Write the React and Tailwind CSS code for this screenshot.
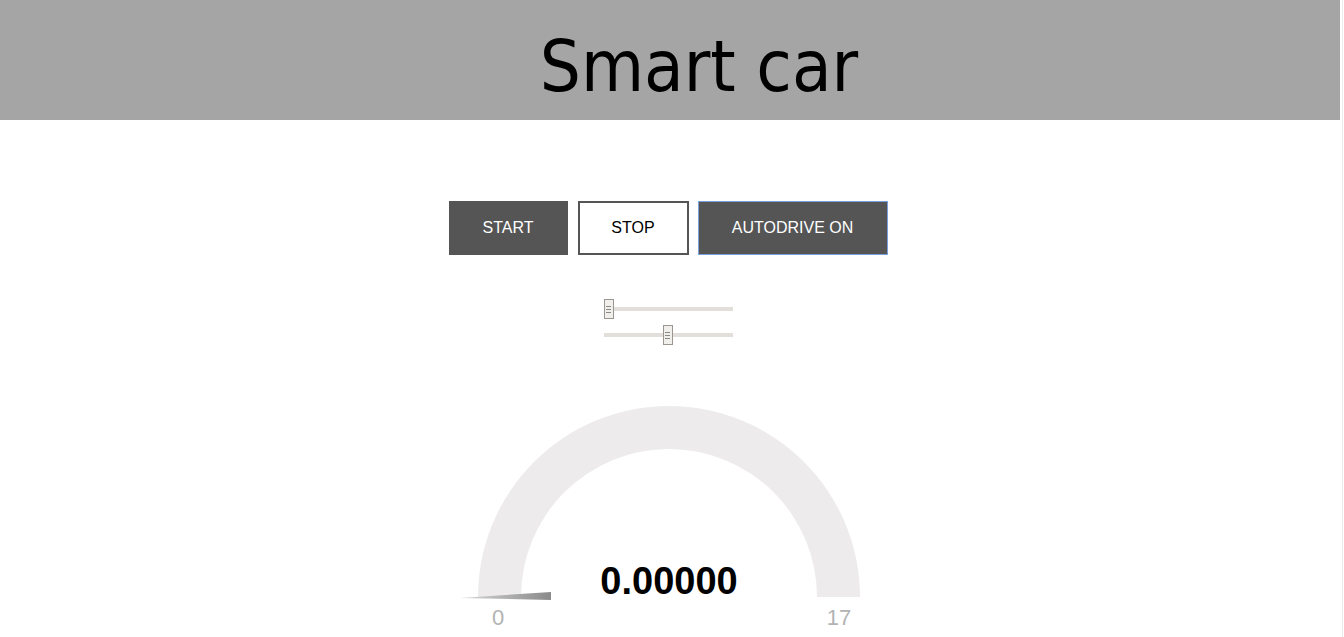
import React from 'react';

const Slider = ({ pos }) => (
  <div className="relative w-[129px] h-[20px]">
    <div className="absolute left-0 right-0 top-[8px] h-[4px] bg-[#e2dfda]" />
    <div
      className="absolute top-0 w-[10px] h-[20px] bg-[#f1efec] border border-[#9c9690] flex flex-col items-center justify-center gap-[2px]"
      style={{ left: pos }}
    >
      <span className="block w-[5px] h-px bg-[#8e8882]" />
      <span className="block w-[5px] h-px bg-[#8e8882]" />
      <span className="block w-[5px] h-px bg-[#8e8882]" />
    </div>
  </div>
);

const Gauge = () => {
  const cx = 210;
  const cy = 197;
  const R = 191;
  const r = 148;
  const arc = `M ${cx - R} ${cy} A ${R} ${R} 0 0 1 ${cx + R} ${cy} L ${cx + r} ${cy} A ${r} ${r} 0 0 0 ${cx - r} ${cy} Z`;
  return (
    <svg width="420" height="237" viewBox="0 0 420 237" className="block">
      <defs>
        <linearGradient id="needle" x1="0" x2="1" y1="0" y2="0">
          <stop offset="0" stopColor="#d8d8d8" />
          <stop offset="1" stopColor="#8a8a8a" />
        </linearGradient>
      </defs>
      <path d={arc} fill="#edebeb" />
      <polygon points="1,198 92,192 92,200" fill="url(#needle)" />
      <text x="210" y="194" textAnchor="middle" fontFamily="'Liberation Sans', Arial, sans-serif" fontWeight="700" fontSize="38" fill="#000">
        0.00000
      </text>
      <text x="39" y="225" textAnchor="middle" fontFamily="'Liberation Sans', Arial, sans-serif" fontSize="22" fill="#b3b3b3">
        0
      </text>
      <text x="380" y="225" textAnchor="middle" fontFamily="'Liberation Sans', Arial, sans-serif" fontSize="22" fill="#b3b3b3">
        17
      </text>
    </svg>
  );
};

export default function App() {
  return (
    <div className="w-[1343px] h-[637px] overflow-hidden bg-white border-r border-[#ececec] font-['Liberation_Sans',Arial,sans-serif]">
      {/* Header */}
      <div className="w-[1340px] h-[120px] bg-[#a5a5a5] flex justify-center pl-[58px]">
        <h1 className="mt-[30px] text-[72px] leading-[72px] text-black font-['DejaVu_Sans_Condensed','DejaVu_Sans',sans-serif] font-stretch-condensed">
          Smart car
        </h1>
      </div>

      {/* Controls */}
      <div className="w-[1340px] flex flex-col items-center">
        <div className="mt-[81px] flex ml-[-4px]">
          <button className="w-[119px] h-[54px] bg-[#555555] text-white text-[16px]">START</button>
          <button className="ml-[10px] w-[111px] h-[54px] bg-white border-2 border-[#555555] text-black text-[16px]">STOP</button>
          <button className="ml-[9px] w-[190px] h-[54px] bg-[#555555] border border-[#7b9fdc] text-white text-[16px]">AUTODRIVE ON</button>
        </div>

        <div className="mt-[44px] flex flex-col gap-[6px] ml-[-4px]">
          <Slider pos={0} />
          <Slider pos={59} />
        </div>

        <div className="mt-[55px] ml-[-2px]">
          <Gauge />
        </div>
      </div>
    </div>
  );
}
